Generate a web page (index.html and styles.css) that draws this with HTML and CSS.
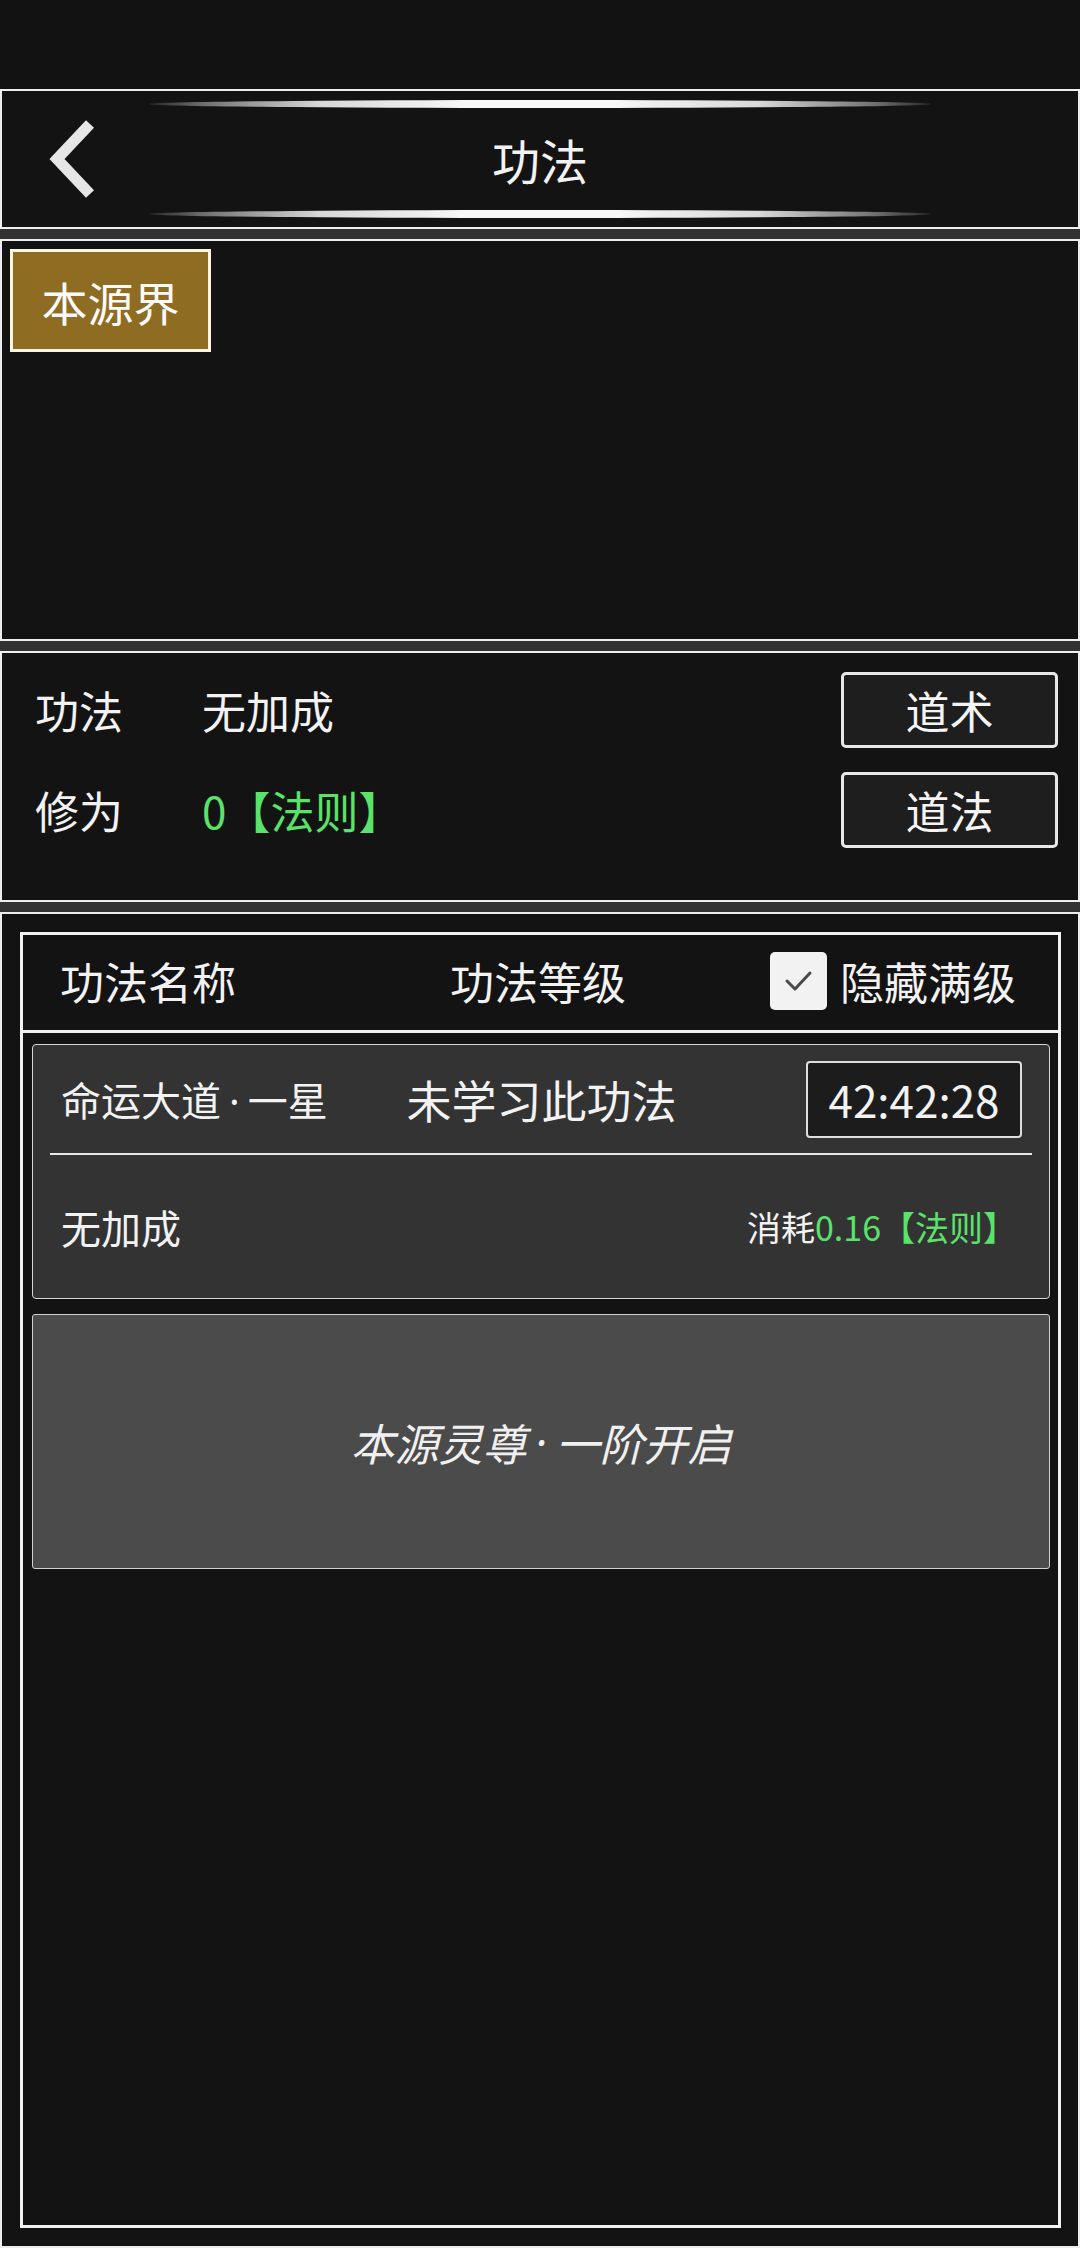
FILE: index.html
```html
<!DOCTYPE html>
<html lang="zh-CN">
<head>
<meta charset="utf-8">
<title>功法</title>
<link rel="stylesheet" href="styles.css">
</head>
<body>
<div class="screen">
  <div class="statusbar"></div>

  <header class="panel topbar">
    <button class="back" aria-label="返回">
      <svg width="52" height="80" viewBox="0 0 52 80"><polyline points="44,5 11,40 44,75" fill="none" stroke="#e6e6e6" stroke-width="11" stroke-linejoin="miter"/></svg>
    </button>
    <div class="glow glow-top"></div>
    <h1 class="title">功法</h1>
    <div class="glow glow-bottom"></div>
  </header>

  <div class="sep"></div>

  <section class="panel realms">
    <button class="realm-tab">本源界</button>
  </section>

  <div class="sep"></div>

  <section class="panel stats">
    <div class="stat-row">
      <span class="stat-label">功法</span>
      <span class="stat-value">无加成</span>
      <button class="act-btn">道术</button>
    </div>
    <div class="stat-row">
      <span class="stat-label">修为</span>
      <span class="stat-value green">0【法则】</span>
      <button class="act-btn">道法</button>
    </div>
  </section>

  <div class="sep"></div>

  <section class="panel list">
    <div class="list-box">
      <div class="list-head">
        <span class="col-name">功法名称</span>
        <span class="col-level">功法等级</span>
        <label class="col-hide">
          <span class="checkbox">
            <svg width="32" height="26" viewBox="0 0 32 26"><polyline points="4,13 12,21 27,5" fill="none" stroke="#4a4a4a" stroke-width="3" stroke-linecap="round" stroke-linejoin="round"/></svg>
          </span>
          <span>隐藏满级</span>
        </label>
      </div>
      <div class="list-body">
        <div class="skill-card">
          <div class="skill-top">
            <span class="skill-name">命运大道<span class="dot">·</span>一星</span>
            <span class="skill-status">未学习此功法</span>
            <span class="timer">42:42:28</span>
          </div>
          <div class="divider"></div>
          <div class="skill-bottom">
            <span class="skill-bonus">无加成</span>
            <span class="skill-cost">消耗<span class="green">0.16【法则】</span></span>
          </div>
        </div>
        <div class="locked-card">本源灵尊<span class="dot">·</span>一阶开启</div>
      </div>
    </div>
  </section>
</div>
</body>
</html>
```

FILE: styles.css
```css
* {
  box-sizing: border-box;
}

html, body {
  margin: 0;
  padding: 0;
  background: #121212;
}

body {
  font-family: "Noto Sans CJK SC", "Noto Sans", sans-serif;
  color: #f2f2f2;
}

.screen {
  width: 1080px;
  height: 2248px;
  display: flex;
  flex-direction: column;
  overflow: hidden;
}

.statusbar {
  height: 89px;
  flex: none;
  background: #121212;
}

.panel {
  flex: none;
  background: #131313;
  border: 2px solid #eeeeee;
}

.sep {
  flex: none;
  height: 10px;
  background: #333333;
}

.dot {
  font-family: "Noto Sans", "DejaVu Sans", sans-serif;
  padding: 0 0.2em;
}

/* ---------- top bar ---------- */
.topbar {
  height: 140px;
  display: grid;
  grid-template-columns: 1fr 782px 1fr;
  grid-template-rows: auto 1fr auto;
  padding: 9px 0;
}

.back {
  grid-column: 1;
  grid-row: 1 / 4;
  align-self: center;
  justify-self: start;
  margin-left: 44px;
  padding: 0;
  border: 0;
  background: none;
  display: flex;
}

.glow {
  grid-column: 2;
  height: 8px;
  border-radius: 50%;
  background: linear-gradient(90deg, #2a2a2a 0%, #777 8%, #d8d8d8 22%, #f6f6f6 40%, #f6f6f6 60%, #d8d8d8 78%, #777 92%, #2a2a2a 100%);
}

.glow-top {
  grid-row: 1;
}

.glow-bottom {
  grid-row: 3;
}

.title {
  grid-column: 2;
  grid-row: 2;
  margin: 0;
  align-self: center;
  text-align: center;
  font-size: 48px;
  font-weight: 400;
  color: #f2f2f2;
  line-height: 1;
}

/* ---------- realms ---------- */
.realms {
  height: 402px;
  padding: 8px;
}

.realm-tab {
  width: 201px;
  height: 103px;
  border: 3px solid #fbf5e2;
  background: #8e6c22;
  color: #fafafa;
  font-family: inherit;
  font-size: 46px;
  line-height: 1;
  padding: 0;
}

/* ---------- stats ---------- */
.stats {
  height: 251px;
  padding: 19px 20px 0 33px;
  display: flex;
  flex-direction: column;
  gap: 24px;
}

.stat-row {
  height: 76px;
  display: flex;
  align-items: center;
  font-size: 44px;
}

.stat-label {
  width: 167px;
}

.stat-value {
  flex: 1;
}

.green {
  color: #5ae26b;
}

.act-btn {
  width: 217px;
  height: 76px;
  border: 3px solid #e8e8e8;
  border-radius: 5px;
  background: #1e1e1e;
  color: #f4f4f4;
  font-family: inherit;
  font-size: 44px;
  line-height: 1;
  padding: 0;
}

/* ---------- list ---------- */
.list {
  flex: 1;
  padding: 18px 17px 18px 18px;
  display: flex;
  flex-direction: column;
}

.list-box {
  flex: 1;
  border: 3px solid #f2f2f2;
  display: flex;
  flex-direction: column;
}

.list-head {
  height: 98px;
  flex: none;
  border-bottom: 3px solid #f2f2f2;
  display: grid;
  grid-template-columns: 1fr auto 1fr;
  align-items: center;
  padding: 0 42px 4px 37px;
  font-size: 44px;
}

.col-name {
  justify-self: start;
}

.col-level {
  justify-self: center;
}

.col-hide {
  justify-self: end;
  display: flex;
  align-items: center;
  gap: 13px;
}

.checkbox {
  width: 57px;
  height: 58px;
  border-radius: 5px;
  background: #f2f2f2;
  display: flex;
  align-items: center;
  justify-content: center;
}

.list-body {
  padding: 11px 8px 0 9px;
  display: flex;
  flex-direction: column;
  gap: 15px;
}

.skill-card {
  height: 255px;
  background: #333333;
  border: 1px solid #d6d6d6;
  border-radius: 4px;
  display: flex;
  flex-direction: column;
}

.skill-top {
  height: 108px;
  display: grid;
  grid-template-columns: 1fr auto 1fr;
  align-items: center;
  padding: 0 27px 0 28px;
}

.skill-name {
  justify-self: start;
  font-size: 40px;
}

.skill-status {
  justify-self: center;
  font-size: 45px;
}

.timer {
  justify-self: end;
  width: 216px;
  height: 77px;
  border: 2px solid #dedede;
  border-radius: 4px;
  background: #1c1c1c;
  display: flex;
  align-items: center;
  justify-content: center;
  font-size: 44px;
}

.divider {
  height: 2px;
  margin: 0 17px;
  background: #e8e8e8;
}

.skill-bottom {
  flex: 1;
  display: flex;
  align-items: center;
  justify-content: space-between;
  padding: 0 32px 0 28px;
}

.skill-bonus {
  font-size: 40px;
}

.skill-cost {
  font-size: 34px;
}

.locked-card {
  height: 255px;
  background: #4b4b4b;
  border: 1px solid #d0d0d0;
  border-radius: 3px;
  display: flex;
  align-items: center;
  justify-content: center;
  font-size: 44px;
  font-style: italic;
  color: #f0f0f0;
}
```
